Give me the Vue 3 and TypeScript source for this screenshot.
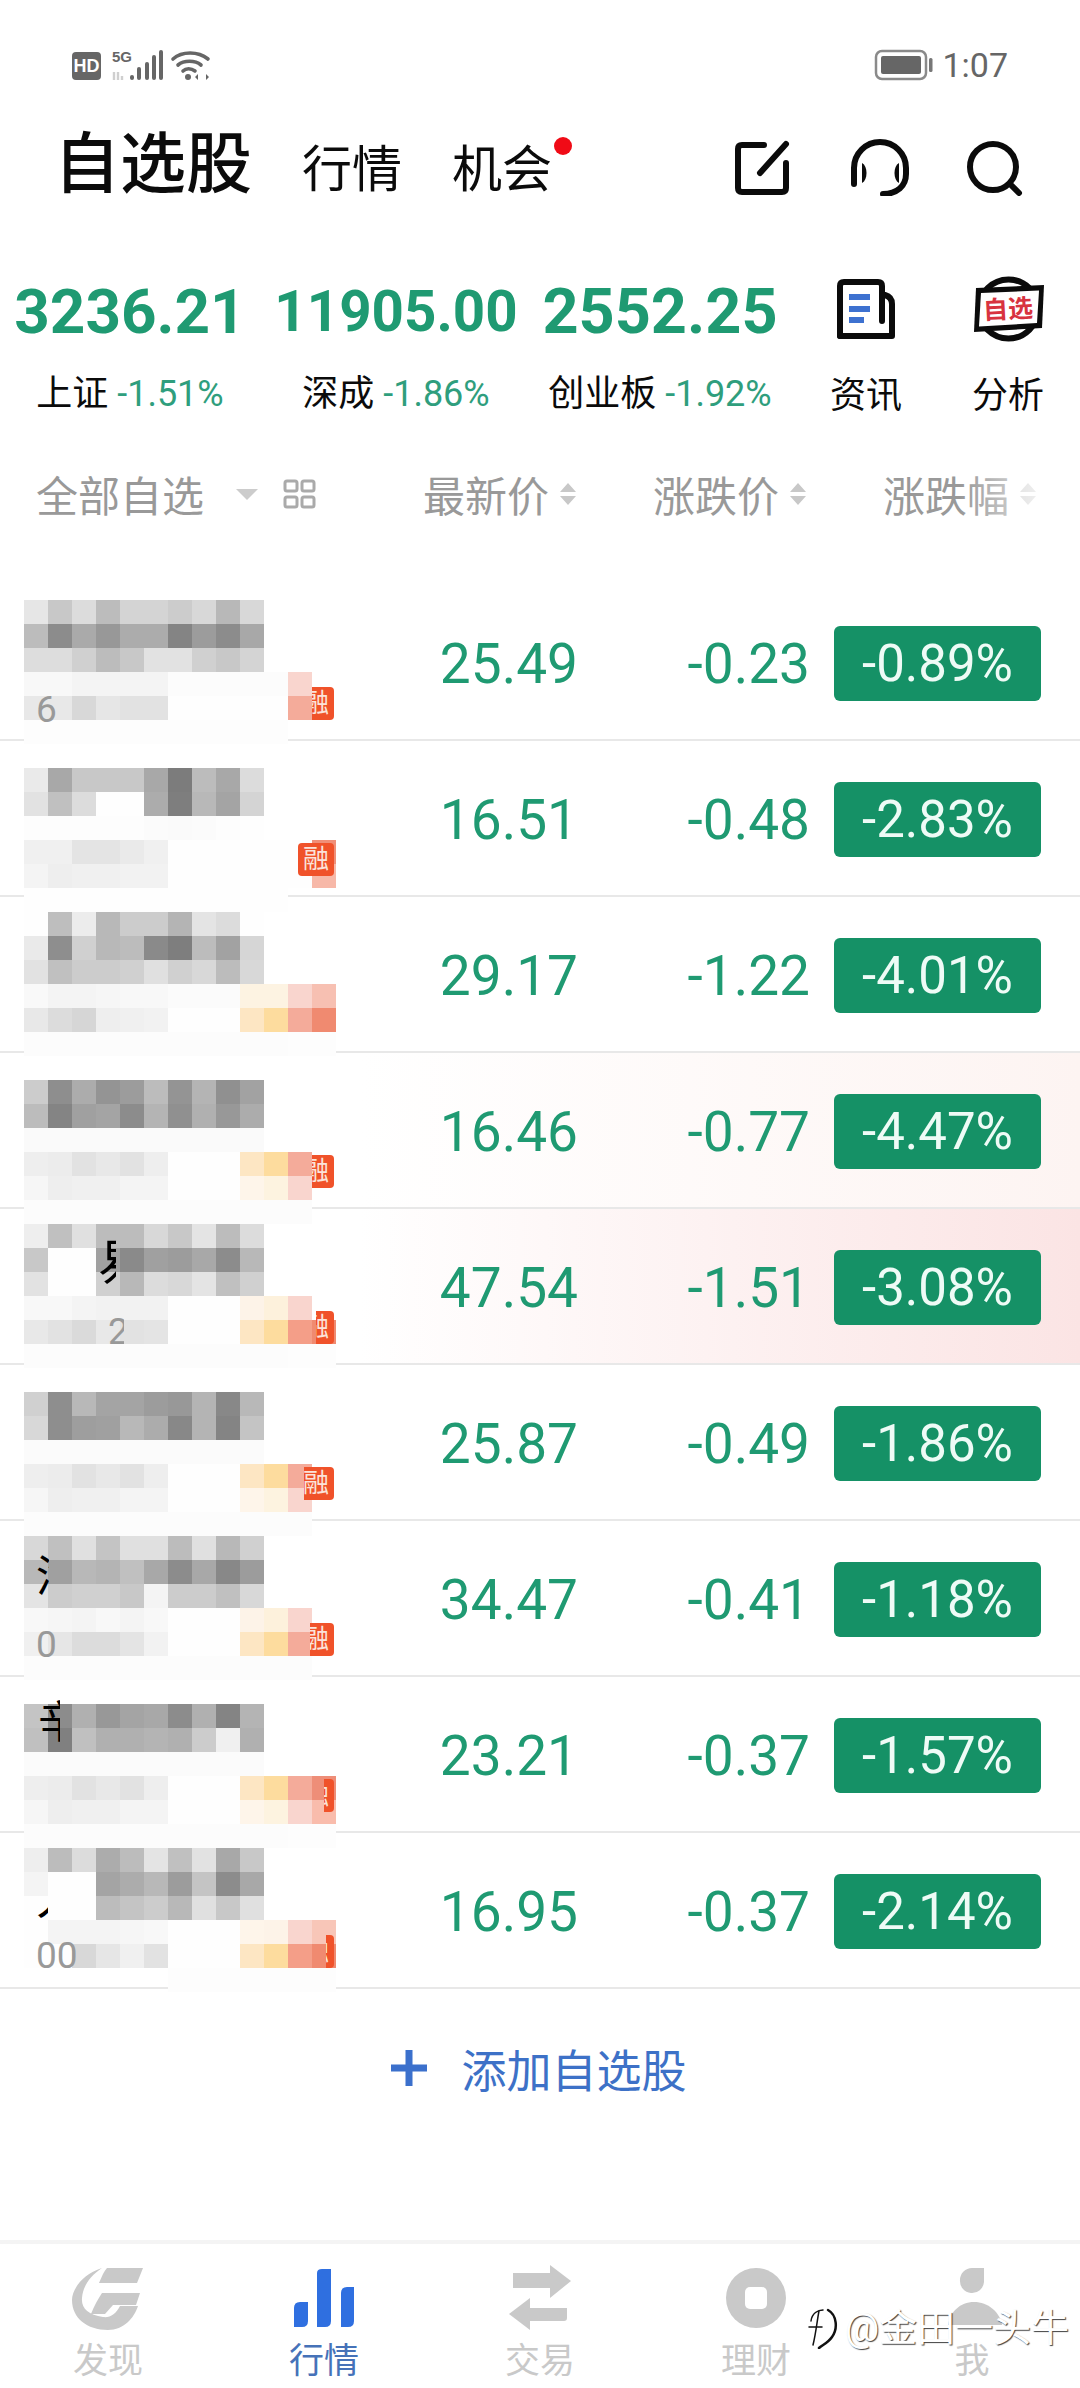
<script setup lang="ts">
interface Bit {
  text: string;
  x: number;
  y: number;
  size: number;
  w: number;
  grey?: boolean;
}

interface Row {
  price: string;
  change: string;
  rate: string;
  top: number;
  tagClip: number;
  tint?: string;
  bits?: Bit[];
  cells: string[];
}

const indexes = [
  { value: "3236.21", size: 62, name: "上证", pct: "-1.51%" },
  { value: "11905.00", size: 56.5, name: "深成", pct: "-1.86%" },
  { value: "2552.25", size: 63, name: "创业板", pct: "-1.92%" },
];

// mosaic over the stock names, one string per line of 24px cells
const rows: Row[] = [
  {
    price: "25.49", change: "-0.23", rate: "-0.89%", top: 15, tagClip: 14,
    bits: [{ text: "6", x: 36, y: 105, size: 37, w: 24, grey: true }],
    cells: [
      "e6 c8 dc bc d4 d4 cc d8 b8 d8",
      "bc 8c aa 98 ac ac 84 9c 8c a8",
      "dd dd d0 bc c8 e2 e2 d0 c8 d4",
      "f8 f8 f4 f4 f4 f4 fc fc fc fc fc f9d5ce",
      "e8 e8 d8 e6 e2 e2 fe fe fe fe fe f4ab9a",
      "fd fd fd fd fd fd fd fd fd fd fd",
    ],
  },
  {
    price: "16.51", change: "-0.48", rate: "-2.83%", top: 27, tagClip: 0,
    cells: [
      "ea a8 c8 c8 c8 a8 7c bc a8 dc",
      "e2 c0 dc fe fe ac 7e b8 a4 d4",
      "fd fd fd fd fd fb fa fb fd fe",
      "f0 f0 e4 e4 ea f0 fe fe fe fe fe fe f08f78",
      "f4 ee f0 f0 f2 f2 fe fe fe fe fe fe f7b8a8",
      "fe fe fe fe fe fe fe fe fe fe fe",
    ],
  },
  {
    price: "29.17", change: "-1.22", rate: "-4.01%", top: 15, tagClip: 40,
    cells: [
      "fe be ec b8 cc cc b4 e4 dc fe",
      "ea 8e d0 b8 bc 8a 7e bc a2 d6",
      "e2 c0 cc cc d0 e0 d0 d8 bc d8",
      "f9 f4 f4 f6 f8 f8 fb fb fb fdf3e2 fdf3e2 f9d5ce f7c0b2",
      "e8 dc d6 ee f0 f2 fe fe fe fde6c3 fddc9e f4ab9a f08a70",
      "fc fc fc fc fc fc fc fc fc fc fc fd fd",
    ],
  },
  {
    price: "16.46", change: "-0.77", rate: "-4.47%", top: 27, tagClip: 14,
    tint: "#fdf4f2",
    cells: [
      "cc 8e ac 94 9c bc 94 b4 90 a2",
      "bc 84 a0 a4 8c b4 90 b0 98 ac",
      "fa fa fa fa fa fa fa fa fa fa",
      "ee ec e2 e8 e2 ee fe fe fe fde6c3 fddc9e f4ab9a",
      "f6 ee f0 f0 f4 f4 fe fe fe fef5ea fdf3e0 f9d5ce",
      "fc fc fc fc fc fc fc fc fc fc fc fc",
    ],
  },
  {
    price: "47.54", change: "-1.51", rate: "-3.08%", top: 15, tagClip: 18,
    tint: "#fbe4e4",
    bits: [
      { text: "易", x: 98, y: 28, size: 50, w: 18 },
      { text: "2", x: 108, y: 103, size: 37, w: 16, grey: true },
    ],
    cells: [
      "ee c0 e0 bc bc d8 c8 e4 bc dc",
      "c8 fe fe a0 8a a0 9c a8 8c b8",
      "e2 fe fe d0 b8 dc d8 e4 c0 d0",
      "f8 f8 f4 f2 f2 f2 fe fe fe fdf3e8 fdf1dc f9d5ce",
      "e8 e2 da e8 e2 e4 fe fe fe fde6c3 fddc9e f49e88 f08a70",
      "fc fc fc fc fc fc fc fc fc fc fc fd fd",
    ],
  },
  {
    price: "25.87", change: "-0.49", rate: "-1.86%", top: 27, tagClip: 6,
    cells: [
      "d0 8e b8 a4 a4 9c 98 b4 88 b8",
      "d8 8e 9e a0 b8 ac 88 b4 84 c4",
      "fb fb fb fb fb fb fb fb fb fb",
      "ee ec e2 e8 e2 ee fe fe fe fde6c3 fddc9e f4ab9a",
      "f6 ee f0 f0 f4 f4 fe fe fe fef5ea fdf3e0 f9d5ce",
      "fc fc fc fc fc fc fc fc fc fc fc fc",
    ],
  },
  {
    price: "34.47", change: "-0.41", rate: "-1.18%", top: 15, tagClip: 12,
    bits: [
      { text: "汽", x: 36, y: 32, size: 44, w: 13 },
      { text: "0", x: 36, y: 104, size: 37, w: 20, grey: true },
    ],
    cells: [
      "d8 c0 e0 c4 e0 e0 bc e0 b8 d0",
      "b8 a0 b8 b4 c0 a8 8c a8 88 9c",
      "e4 cc d0 d0 c8 f4 cc cc c0 d8",
      "f8 f6 f4 f8 f4 f8 fe fe fe fdf3e8 fdf1dc f9d5ce",
      "f0 e6 dc dc e4 f2 fe fe fe fde6c3 fddc9e f4ab9a",
      "fc fc fc fc fc fc fc fc fc fc fc fc",
    ],
  },
  {
    price: "23.21", change: "-0.37", rate: "-1.57%", top: 27, tagClip: 26,
    bits: [{ text: "辛", x: 38, y: 22, size: 44, w: 22 }],
    cells: [
      "c4 8c b0 98 a4 a8 8c b0 84 b4",
      "c0 80 c0 b0 b0 b4 b0 cc f0 b0",
      "fb fb fb fb fb fb fb fb fb fb",
      "ee ec e2 e8 e2 ee fe fe fe fde6c3 fddc9e f4ab9a ee8e78",
      "f6 ee f0 f0 f4 f4 fe fe fe fef5ea fdf3e0 f9d5ce f9bcac",
      "fc fc fc fc fc fc fc fc fc fc fc fd fd",
    ],
  },
  {
    price: "16.95", change: "-0.37", rate: "-2.14%", top: 15, tagClip: 28,
    bits: [
      { text: "人", x: 36, y: 40, size: 46, w: 12 },
      { text: "00", x: 36, y: 103, size: 37, w: 46, grey: true },
    ],
    cells: [
      "ee bc dc ac bc e4 c0 e2 a8 c8",
      "f4 fe fe a4 ac b8 9c c4 8c a8",
      "fe fe fe bc c4 cc b8 e0 c8 e0",
      "fe f4 f4 f4 f6 f8 fe fe fe fef5ea fdf3e8 f9d5ce f8c6b8",
      "fe fe d8 e6 f0 e2 fe fe fe fde6c3 fddc9e f49e88 f08a70",
      ". . . . . . fd fd fd fd fd fd fd",
    ],
  },
];

const cellColor = (code: string) => {
  if (code === ".") return "transparent";
  return code.length === 2 ? `#${code}${code}${code}` : `#${code}`;
};

const splitCells = (cells: string[]) => cells.flatMap((line) => {
  const parts = line.split(" ");
  while (parts.length < 13) parts.push(".");
  return parts;
});

const tabs = ["发现", "行情", "交易", "理财", "我"];
</script>

<template>
  <div class="page">
    <div class="status">
      <div class="hd">HD</div>
      <svg class="net" width="106" height="34" viewBox="0 0 106 34">
        <text x="7" y="14" class="net-5g">5G</text>
        <path d="M9 24v8M13 24v8M17 28v4" stroke="#cfcfcf" stroke-width="2.4" fill="none" />
        <g fill="#666">
          <rect x="25" y="27" width="4" height="5" rx="2" />
          <rect x="32" y="19" width="4" height="13" rx="2" />
          <rect x="40" y="14" width="4" height="18" rx="2" />
          <rect x="47" y="7" width="4" height="25" rx="2" />
          <rect x="54" y="2" width="4" height="30" rx="2" />
          <circle cx="83" cy="29" r="3" />
          <path d="M96 26v6M101 26l3 3-3 3zM93 26l-3 3 3 3z" />
        </g>
        <g fill="none" stroke="#666" stroke-width="3.6" stroke-linecap="round">
          <path d="M68 11C77 3 93 3 103 11" />
          <path d="M73 17C79 12 90 12 96 17" />
          <path d="M78 23C81 20 86 20 90 23" />
        </g>
      </svg>
      <svg class="battery" width="60" height="32" viewBox="0 0 60 32">
        <rect x="2" y="2" width="50" height="28" rx="6" fill="none" stroke="#8a8a8a" stroke-width="2.5" />
        <rect x="7" y="7" width="40" height="18" rx="2" fill="#666" />
        <rect x="55" y="9" width="3.5" height="14" rx="1.5" fill="#777" />
      </svg>
      <span class="time">1:07</span>
    </div>

    <header class="head">
      <h1 class="title">自选股</h1>
      <span class="head-tab">行情</span>
      <span class="head-tab dot-tab">机会<i class="dot"></i></span>
      <div class="head-icons">
        <svg width="62" height="62" viewBox="0 0 62 62" fill="none" stroke="#0b0b0b" stroke-width="6" stroke-linecap="round" stroke-linejoin="round">
          <path d="M33 11H11Q7 11 7 15V54Q7 58 11 58H51Q55 58 55 54V29" />
          <path d="M55 10L29 39" />
        </svg>
        <svg width="62" height="62" viewBox="0 0 62 62" fill="none" stroke="#0b0b0b" stroke-width="6" stroke-linecap="round">
          <path d="M7 50V34A26 26 0 0 1 59 34V40C59 52 50 60 36 60" />
          <path d="M15 29C21 32 21 46 15 49Z" fill="#0b0b0b" stroke="none" />
          <path d="M52 29C46 32 46 46 52 49Z" fill="#0b0b0b" stroke="none" />
        </svg>
        <svg width="62" height="62" viewBox="0 0 62 62" fill="none" stroke="#0b0b0b" stroke-width="6" stroke-linecap="round">
          <circle cx="30" cy="33" r="23" />
          <path d="M47 50L56 59" />
        </svg>
      </div>
    </header>

    <section class="market">
      <div v-for="item in indexes" :key="item.name" class="index">
        <div class="index-value" :style="{ fontSize: item.size + 'px' }">{{ item.value }}</div>
        <div class="index-sub">{{ item.name }} <span class="index-pct">{{ item.pct }}</span></div>
      </div>
      <div class="shortcut">
        <svg width="62" height="66" viewBox="0 0 62 66" fill="none" stroke="#0b0b0b" stroke-width="6" stroke-linecap="round" stroke-linejoin="round">
          <path d="M5 60V10Q5 6 9 6H43Q47 6 47 10V45" />
          <path d="M5 60H57V28Q57 21 50 19" />
          <path d="M14 18H35V24H14ZM14 30H35V36H14ZM14 41H29V47H14Z" fill="#3d71d0" stroke="none" />
        </svg>
        <span>资讯</span>
      </div>
      <div class="shortcut">
        <svg width="74" height="66" viewBox="0 0 74 66">
          <circle cx="37.5" cy="33" r="29.5" fill="#fff" stroke="#0b0b0b" stroke-width="6" />
          <path d="M5 12L73 9L71 52L3 56Z" fill="#0b0b0b" />
          <path d="M10 17L68 14.500L66 47L8 50.500Z" fill="#fff" />
          <text x="37" y="42" transform="rotate(-3 37 32)" class="analysis-text">自选</text>
        </svg>
        <span>分析</span>
      </div>
    </section>

    <div class="thead">
      <div class="thead-name">
        <span>全部自选</span>
        <i class="caret"></i>
        <svg width="33" height="30" viewBox="0 0 33 30" fill="none" stroke="#aaa" stroke-width="3">
          <rect x="2" y="2" width="12" height="10" rx="2" />
          <rect x="19" y="2" width="12" height="10" rx="2" />
          <rect x="2" y="18" width="12" height="10" rx="2" />
          <rect x="19" y="18" width="12" height="10" rx="2" />
        </svg>
      </div>
      <div v-for="label in ['最新价', '涨跌价', '涨跌幅']" :key="label" class="thead-col">
        <span>{{ label }}</span>
        <svg width="18" height="24" viewBox="0 0 18 24" fill="#c8c8c8">
          <path d="M9 1L17 10H1ZM9 23L1 14H17Z" />
        </svg>
      </div>
      <div class="thead-fade"></div>
    </div>

    <div class="list">
      <div v-for="row in rows" :key="row.rate" class="row" :style="row.tint ? { background: `linear-gradient(to right, #fff 360px, ${row.tint})` } : undefined">
        <div class="mosaic" :style="{ top: row.top + 'px' }">
          <i v-for="(code, i) in splitCells(row.cells)" :key="i" :style="{ background: cellColor(code) }"></i>
        </div>
        <span class="tag" :style="{ clipPath: `inset(0 0 0 ${row.tagClip}px)` }">融</span>
        <span
          v-for="bit in row.bits"
          :key="bit.text"
          class="bit"
          :class="{ grey: bit.grey }"
          :style="{ left: bit.x + 'px', top: bit.y + 'px', fontSize: bit.size + 'px', width: bit.w + 'px' }"
        >{{ bit.text }}</span>
        <div class="cell-price">{{ row.price }}</div>
        <div class="cell-change">{{ row.change }}</div>
        <div class="cell-rate">{{ row.rate }}</div>
      </div>
    </div>

    <div class="add">
      <svg width="36" height="36" viewBox="0 0 36 36" fill="#3b70cc">
        <path d="M14.500 0H21.500V14.500H36V21.500H21.500V36H14.500V21.500H0V14.500H14.500Z" />
      </svg>
      <span>添加自选股</span>
    </div>

    <nav class="tabs">
      <div v-for="(tab, i) in tabs" :key="tab" class="tab" :class="{ active: i === 1 }">
        <svg width="72" height="64" viewBox="0 0 72 64" class="tab-icon">
          <g v-if="i === 0" fill="#c9c9c9">
            <path d="M30 0C10 6 0 22 0 32C0 50 15 62 36 62C52 62 62 50 66 38H48C44 46 38 50 31 49C16 47 9 40 10 30C11 18 18 8 30 0Z" />
            <path d="M35 0H71L65 15H27C30 8 32 3 35 0Z" />
            <path d="M30 25H68L64 37H41L33 46H19C22 38 26 31 30 25Z" />
          </g>
          <g v-else-if="i === 1" fill="#2f6fe0">
            <path d="M6 40Q6 34 12 34H20V53Q20 59 14 59H6Z" />
            <path d="M29 5Q29 1 34 1H43V53Q43 59 37 59H29Z" />
            <path d="M53 25Q53 19 59 19H66V53Q66 59 60 59H53Z" />
          </g>
          <g v-else-if="i === 2" fill="#c9c9c9">
            <path d="M9 5H46V-3L67 13L46 30V20H9Z" />
            <path d="M63 40H26V30L5 46L26 62V53H60Q63 53 63 50Z" />
          </g>
          <g v-else-if="i === 3">
            <circle cx="36" cy="30" r="30" fill="#c9c9c9" />
            <rect x="25" y="19" width="22" height="22" rx="5" fill="#fff" />
          </g>
          <g v-else fill="#c9c9c9">
            <path d="M36 0H48V14A12 12 0 1 1 24 12A12 12 0 0 1 36 0Z" />
            <path d="M12 57C14 44 24 34 38 34C52 34 64 44 66 57Z" />
          </g>
        </svg>
        <span>{{ tab }}</span>
      </div>
    </nav>

    <div class="watermark">
      <svg width="34" height="42" viewBox="0 0 34 42" fill="none" stroke="#111" stroke-width="1.500" stroke-linecap="round">
        <path d="M3 14C4 6 10 3 15 3M11 4C9 14 8 26 5 38M1 20H14" />
        <path d="M20 3C29 8 30 22 24 30C20 36 14 38 11 41" stroke-width="2.500" />
      </svg>
      <span>@金田一头牛</span>
    </div>
  </div>
</template>

<style>
html,
body {
  margin: 0;
  background: #fff;
}
</style>

<style scoped>
.page {
  position: relative;
  width: 1080px;
  height: 2388px;
  overflow: hidden;
  display: flex;
  flex-direction: column;
  background: #fff;
  color: #0b0b0b;
  font-family: Roboto, "Noto Sans CJK SC", sans-serif;
}

.status {
  height: 120px;
  box-sizing: border-box;
  padding: 48px 72px 0;
  display: flex;
  align-items: flex-start;
}

.hd {
  width: 29px;
  height: 28px;
  margin-top: 4px;
  border-radius: 4px;
  background: #666;
  color: #fff;
  font: 700 18px/28px "Liberation Sans", sans-serif;
  text-align: center;
}

.net {
  margin-left: 4px;
}

.net-5g {
  font: 700 15px "Liberation Sans", sans-serif;
  fill: #666;
}

.battery {
  margin-left: auto;
  margin-top: 1px;
}

.time {
  margin-left: 8px;
  font-size: 34px;
  line-height: 34px;
  color: #666;
}

.head {
  height: 90px;
  padding: 0 55px 0 54px;
  display: flex;
  align-items: center;
}

.title {
  margin: 0 50px 0 0;
  font-size: 66px;
  font-weight: 500;
  line-height: 90px;
}

.head-tab {
  position: relative;
  margin: 10px 50px 0 0;
  font-size: 50px;
  line-height: 60px;
}

.dot {
  position: absolute;
  left: 102px;
  top: -3px;
  width: 18px;
  height: 18px;
  border-radius: 50%;
  background: #f00b16;
}

.head-icons {
  margin-left: auto;
  display: flex;
  gap: 54px;
}

.market {
  height: 210px;
  display: grid;
  grid-template-columns: 260px 272px 256px 156px 128px;
  padding-top: 66px;
  box-sizing: border-box;
}

.index {
  text-align: center;
}

.index-value {
  height: 72px;
  line-height: 72px;
  font-weight: 700;
  color: #1f9a72;
  white-space: nowrap;
}

.index-sub {
  margin-top: 24px;
  font-size: 36px;
  line-height: 44px;
  white-space: nowrap;
}

.index-pct {
  color: #2f9e7d;
}

.shortcut {
  display: flex;
  flex-direction: column;
  align-items: center;
  gap: 32px;
  font-size: 36px;
  line-height: 44px;
}

.analysis-text {
  font: 700 25px "Noto Sans CJK SC", sans-serif;
  fill: #d8333f;
  text-anchor: middle;
}

.thead {
  position: relative;
  height: 165px;
  box-sizing: border-box;
  padding: 0 43px 18px 36px;
  display: flex;
  align-items: center;
  color: #999;
  font-size: 42px;
}

.thead-name {
  flex: 1;
  display: flex;
  align-items: center;
}

.caret {
  width: 0;
  height: 0;
  margin: 2px 25px 0 32px;
  border: 11px solid transparent;
  border-top-color: #ccc;
  border-bottom: 0;
}

.thead-col {
  width: 230px;
  display: flex;
  justify-content: flex-end;
  align-items: center;
  gap: 10px;
}

.thead-fade {
  position: absolute;
  left: 960px;
  right: 20px;
  top: 40px;
  bottom: 40px;
  background: linear-gradient(to right, rgba(255, 255, 255, 0), rgba(255, 255, 255, 0.9));
}

.row {
  position: relative;
  height: 156px;
  box-sizing: border-box;
  padding: 3px 39px 0 36px;
  border-bottom: 2px solid #e8e8e8;
  display: flex;
  align-items: center;
  justify-content: flex-end;
}

.row:last-child {
  border-bottom-color: #e8e8e8;
}

.mosaic {
  position: absolute;
  left: 24px;
  z-index: 1;
  display: grid;
  grid-template-columns: repeat(13, 24px);
  grid-auto-rows: 24px;
}

.tag {
  position: absolute;
  left: 298px;
  top: 102px;
  z-index: 2;
  width: 36px;
  height: 33px;
  border-radius: 4px;
  background: #f0522a;
  color: #fbe3da;
  font-size: 26px;
  line-height: 33px;
  text-align: center;
}

.bit {
  position: absolute;
  z-index: 3;
  overflow: hidden;
  line-height: 1.1;
  white-space: nowrap;
  color: #000;
}

.bit.grey {
  color: #999;
}

.cell-price,
.cell-change {
  font-size: 55px;
  color: #1f9a72;
  text-align: right;
}

.cell-price {
  width: 160px;
}

.cell-change {
  width: 232px;
}

.cell-rate {
  width: 207px;
  height: 75px;
  margin-left: 24px;
  border-radius: 6px;
  background: #159166;
  color: #eefbf6;
  font-size: 51px;
  line-height: 75px;
  text-align: center;
}

.add {
  height: 158px;
  display: flex;
  align-items: center;
  justify-content: center;
  gap: 34px;
  padding-right: 2px;
  color: #3d71c7;
  font-size: 45px;
}

.tabs {
  margin-top: auto;
  height: 148px;
  box-sizing: border-box;
  border-top: 4px solid #f4f4f4;
  padding-top: 24px;
  display: grid;
  grid-template-columns: repeat(5, 216px);
}

.tab {
  display: flex;
  flex-direction: column;
  align-items: center;
  color: #c9c9c9;
  font-size: 35px;
  line-height: 40px;
}

.tab.active {
  color: #4672b8;
}

.tab-icon {
  margin-bottom: 10px;
  overflow: visible;
}

.watermark {
  position: absolute;
  left: 808px;
  top: 2306px;
  display: flex;
  align-items: center;
  gap: 3px;
  color: #fff;
  font-size: 38px;
  line-height: 44px;
  text-shadow: 1px 1px 1px rgba(0, 0, 0, 0.75);
}
</style>
